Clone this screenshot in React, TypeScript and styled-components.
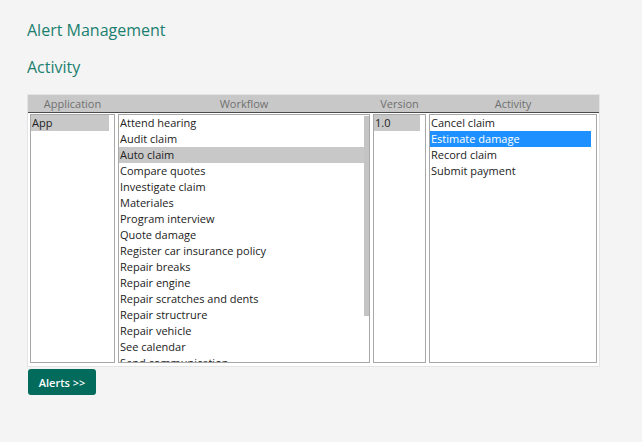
import React from "react";
import styled, { createGlobalStyle } from "styled-components";

const Global = createGlobalStyle`
  html, body { margin: 0; padding: 0; background: #f4f4f4; }
  body { font-family: "Open Sans", "Liberation Sans", sans-serif; }
`;

const Page = styled.div`
  padding: 18px 0 0 27px;
  width: 572px;
`;

const Title = styled.h1`
  margin: 0;
  font-size: 16px;
  line-height: 24px;
  font-weight: 400;
  color: #1b7f6f;
`;

const SubTitle = styled(Title)`
  margin-top: 13px;
`;

const Panel = styled.div`
  margin-top: 15px;
  background: #fff;
  border: 1px solid #e4e4e4;
  padding: 0 1px 3px 0;
  width: 570px;
`;

const Header = styled.div`
  display: grid;
  grid-template-columns: 85px 252px 53px 168px;
  column-gap: 3px;
  padding-left: 2px;
  margin-right: -1px;
  height: 17px;
  background: #c8c8c8;
  border-bottom: 1px solid #4a4a4a;
`;

const HeadCell = styled.div`
  font-size: 11px;
  line-height: 17px;
  color: #707070;
  text-align: center;
`;

const Body = styled.div`
  display: grid;
  grid-template-columns: 85px 252px 53px 168px;
  column-gap: 3px;
  padding-left: 2px;
  margin-top: 1px;
`;

const ListBox = styled.div`
  height: 247px;
  border: 1px solid #a8a8a8;
  background: #fff;
  display: flex;
  overflow: hidden;
`;

const Items = styled.div`
  flex: 1;
  min-width: 0;
  overflow: hidden;
`;

const Track = styled.div`
  width: 5px;
  flex: none;
  padding-top: 1px;
`;

const Thumb = styled.div`
  background: #c4c4c4;
`;

const Item = styled.div<{ $sel?: "gray" | "blue" }>`
  font-size: 11px;
  line-height: 16px;
  height: 16px;
  padding: 0 1px;
  white-space: nowrap;
  overflow: hidden;
  color: ${(p) => (p.$sel === "blue" ? "#fff" : "#222")};
  background: ${(p) =>
    p.$sel === "blue" ? "#1e90ff" : p.$sel === "gray" ? "#c8c8c8" : "transparent"};
`;

const Button = styled.button`
  margin: 2px 0 0 1px;
  width: 68px;
  height: 26px;
  border: none;
  border-radius: 3px;
  background: #026b5b;
  color: #fff;
  font-family: "Open Sans", "Liberation Sans", sans-serif;
  font-size: 11px;
  font-weight: 600;
  cursor: pointer;
`;

const workflows = [
  "Attend hearing",
  "Audit claim",
  "Auto claim",
  "Compare quotes",
  "Investigate claim",
  "Materiales",
  "Program interview",
  "Quote damage",
  "Register car insurance policy",
  "Repair breaks",
  "Repair engine",
  "Repair scratches and dents",
  "Repair structrure",
  "Repair vehicle",
  "See calendar",
  "Send communication",
  "Settle claim",
  "Submit claim",
  "Validate documents",
];

const activities = ["Cancel claim", "Estimate damage", "Record claim", "Submit payment"];

const LIST_H = 247;
const ROW_H = 16;

function List({
  items,
  selected,
  tone,
}: {
  items: string[];
  selected: string;
  tone: "gray" | "blue";
}) {
  const content = items.length * ROW_H;
  const thumb = content > LIST_H ? Math.round((LIST_H * LIST_H) / content) - 1 : 0;
  return (
    <ListBox>
      <Items>
        {items.map((it) => (
          <Item key={it} $sel={it === selected ? tone : undefined}>
            {it}
          </Item>
        ))}
      </Items>
      <Track>{thumb > 0 && <Thumb style={{ height: thumb }} />}</Track>
    </ListBox>
  );
}

export default function App() {
  return (
    <>
      <Global />
      <Page>
        <Title>Alert Management</Title>
        <SubTitle>Activity</SubTitle>
        <Panel>
          <Header>
            <HeadCell>Application</HeadCell>
            <HeadCell>Workflow</HeadCell>
            <HeadCell>Version</HeadCell>
            <HeadCell>Activity</HeadCell>
          </Header>
          <Body>
            <List items={["App"]} selected="App" tone="gray" />
            <List items={workflows} selected="Auto claim" tone="gray" />
            <List items={["1.0"]} selected="1.0" tone="gray" />
            <List items={activities} selected="Estimate damage" tone="blue" />
          </Body>
        </Panel>
        <Button>Alerts &gt;&gt;</Button>
      </Page>
    </>
  );
}
